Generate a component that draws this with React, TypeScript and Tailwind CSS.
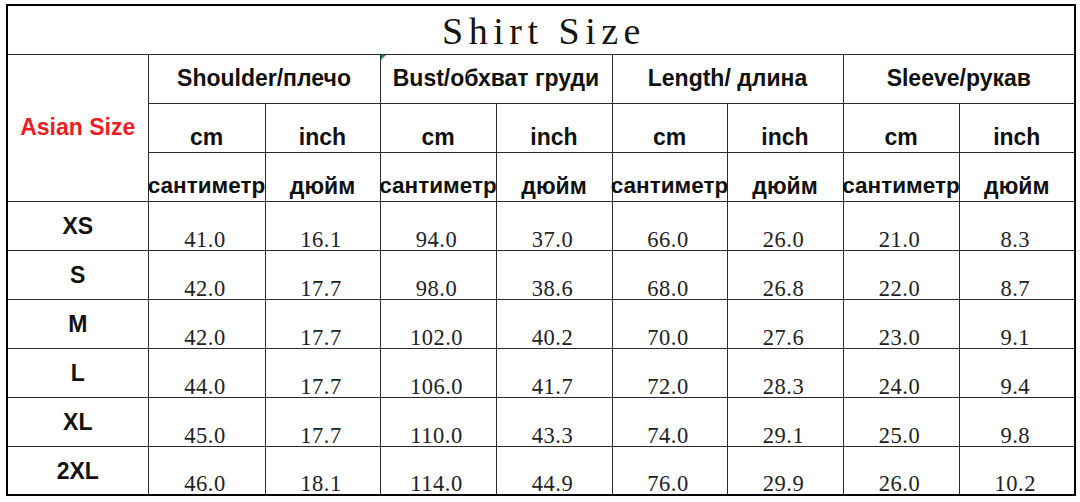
import React from 'react';

const groups = ['Shoulder/плечо', 'Bust/обхват груди', 'Length/ длина', 'Sleeve/рукав'];

const rows: { size: string; values: string[] }[] = [
  { size: 'XS', values: ['41.0', '16.1', '94.0', '37.0', '66.0', '26.0', '21.0', '8.3'] },
  { size: 'S', values: ['42.0', '17.7', '98.0', '38.6', '68.0', '26.8', '22.0', '8.7'] },
  { size: 'M', values: ['42.0', '17.7', '102.0', '40.2', '70.0', '27.6', '23.0', '9.1'] },
  { size: 'L', values: ['44.0', '17.7', '106.0', '41.7', '72.0', '28.3', '24.0', '9.4'] },
  { size: 'XL', values: ['45.0', '17.7', '110.0', '43.3', '74.0', '29.1', '25.0', '9.8'] },
  { size: '2XL', values: ['46.0', '18.1', '114.0', '44.9', '76.0', '29.9', '26.0', '10.2'] },
];

const colWidths = [141, 117, 115, 116, 116, 115, 116, 116, 116];

const sans = "font-['Liberation_Sans',Arial,sans-serif]";
const serif = "font-['Liberation_Serif','Times_New_Roman',serif]";
const cell = 'border border-[#2b2b2b] p-0';

export default function App() {
  return (
    <div className="w-[1080px] h-[502px] bg-white pt-[4px] pl-[6px]">
      <table className="table-fixed border-collapse border-2 border-black w-[1068px] text-[#111]">
        <colgroup>
          {colWidths.map((w, i) => (
            <col key={i} style={{ width: w }} />
          ))}
        </colgroup>
        <tbody>
          <tr className="h-[49px]">
            <td colSpan={9} className={`${cell} text-center align-middle`}>
              <span className={`${serif} text-[38px] leading-none tracking-[5.5px] text-[#141414] pl-[6px] relative top-[1px]`}>
                Shirt Size
              </span>
            </td>
          </tr>
          <tr className="h-[49px]">
            <td rowSpan={3} className={`${cell} text-center align-middle`}>
              <span className={`${sans} font-bold text-[23px] text-[#ee1c25]`}>Asian Size</span>
            </td>
            {groups.map((g, i) => (
              <td key={g} colSpan={2} className={`${cell} relative text-center align-middle`}>
                {i === 1 && (
                  <div className="absolute left-0 top-0 w-0 h-0 border-t-[5px] border-r-[5px] border-t-[#1e8a3a] border-r-transparent" />
                )}
                <span className={`${sans} font-bold text-[23px] whitespace-nowrap`}>{g}</span>
              </td>
            ))}
          </tr>
          <tr className="h-[49px]">
            {groups.map((g) => (
              <React.Fragment key={g}>
                <td className={`${cell} text-center align-bottom`}>
                  <div className={`${sans} font-bold text-[23px] leading-[22px] pb-[4px]`}>cm</div>
                </td>
                <td className={`${cell} text-center align-bottom`}>
                  <div className={`${sans} font-bold text-[23px] leading-[22px] pb-[4px]`}>inch</div>
                </td>
              </React.Fragment>
            ))}
          </tr>
          <tr className="h-[49px]">
            {groups.map((g) => (
              <React.Fragment key={g}>
                <td className={`${cell} text-center align-bottom overflow-visible`}>
                  <div className={`${sans} font-bold text-[22.5px] leading-[22px] pb-[4px] whitespace-nowrap -mx-[3px]`}>
                    сантиметр
                  </div>
                </td>
                <td className={`${cell} text-center align-bottom`}>
                  <div className={`${sans} font-bold text-[23px] leading-[22px] pb-[4px]`}>дюйм</div>
                </td>
              </React.Fragment>
            ))}
          </tr>
          {rows.map((r) => (
            <tr key={r.size} className="h-[49px]">
              <td className={`${cell} text-center align-top`}>
                <div className={`${sans} font-bold text-[23px] leading-[22px] pt-[13px]`}>{r.size}</div>
              </td>
              {r.values.map((v, i) => (
                <td key={i} className={`${cell} text-center align-bottom`}>
                  <div className={`${serif} text-[22.5px] leading-[18px] tracking-[0.5px] text-[#222] pb-[1px] pr-[3px]`}>{v}</div>
                </td>
              ))}
            </tr>
          ))}
        </tbody>
      </table>
    </div>
  );
}
